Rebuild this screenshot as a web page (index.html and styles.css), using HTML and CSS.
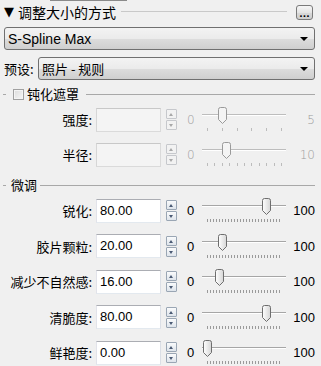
FILE: index.html
```html
<!DOCTYPE html>
<html lang="zh-CN">
<head>
<meta charset="utf-8">
<link rel="stylesheet" href="styles.css">
</head>
<body>
<div class="panel">
  <div class="topmark"></div>
  <div class="header">
    <span class="tri">▼</span>
    <span class="title">调整大小的方式</span>
    <span class="rule"></span>
    <span class="more"><span class="dots">...</span></span>
  </div>
  <div class="select wide"><span class="sel-text latin">S-Spline Max</span><span class="arrow"></span></div>
  <div class="preset">
    <span class="preset-label">预设:</span>
    <div class="select grow"><span class="sel-text">照片 - 规则</span><span class="arrow"></span></div>
  </div>

  <div class="legend">
    <span class="dash"></span>
    <span class="check"></span>
    <span class="legend-text">钝化遮罩</span>
    <span class="legend-rule"></span>
  </div>
  <div class="row disabled first">
    <span class="label">强度:</span>
    <span class="input"></span>
    <span class="spin"><span class="sbtn up"></span><span class="sbtn down"></span></span>
    <span class="minv">0</span>
    <span class="slider"><span class="track"></span><span class="ticks sparse"><i></i><i></i><i></i><i></i><i></i><i></i></span><span class="thumb" style="left:15px"><svg width="11" height="18" viewBox="0 0 11 18"><path d="M1.5 2.5 Q1.5 0.5 3.5 0.5 H7.5 Q9.5 0.5 9.5 2.5 V12.5 L5.5 16.5 L1.5 12.5 Z" fill="#f4f4f4" stroke="#9a9a9a"/></svg></span></span>
    <span class="maxv">5</span>
  </div>
  <div class="row disabled">
    <span class="label">半径:</span>
    <span class="input"></span>
    <span class="spin"><span class="sbtn up"></span><span class="sbtn down"></span></span>
    <span class="minv">0</span>
    <span class="slider"><span class="track"></span><span class="ticks sparse"><i></i><i></i><i></i><i></i><i></i><i></i><i></i><i></i><i></i><i></i><i></i></span><span class="thumb" style="left:19px"><svg width="11" height="18" viewBox="0 0 11 18"><path d="M1.5 2.5 Q1.5 0.5 3.5 0.5 H7.5 Q9.5 0.5 9.5 2.5 V12.5 L5.5 16.5 L1.5 12.5 Z" fill="#f4f4f4" stroke="#9a9a9a"/></svg></span></span>
    <span class="maxv">10</span>
  </div>

  <div class="legend second">
    <span class="dash"></span>
    <span class="legend-text">微调</span>
    <span class="legend-rule"></span>
  </div>
  <div class="row fine">
    <span class="label">锐化:</span>
    <span class="input">80.00</span>
    <span class="spin"><span class="sbtn up"></span><span class="sbtn down"></span></span>
    <span class="minv">0</span>
    <span class="slider"><span class="track"></span><span class="ticks dense"></span><span class="thumb" style="left:59px"><svg width="11" height="18" viewBox="0 0 11 18"><defs><linearGradient id="g1" x1="0" y1="0" x2="1" y2="0"><stop offset="0" stop-color="#ffffff"/><stop offset="1" stop-color="#d6d6d6"/></linearGradient></defs><path d="M1.5 2.5 Q1.5 0.5 3.5 0.5 H7.5 Q9.5 0.5 9.5 2.5 V12.5 L5.5 16.5 L1.5 12.5 Z" fill="url(#g1)" stroke="#6e6e6e"/></svg></span></span>
    <span class="maxv">100</span>
  </div>
  <div class="row fine">
    <span class="label">胶片颗粒:</span>
    <span class="input">20.00</span>
    <span class="spin"><span class="sbtn up"></span><span class="sbtn down"></span></span>
    <span class="minv">0</span>
    <span class="slider"><span class="track"></span><span class="ticks dense"></span><span class="thumb" style="left:15px"><svg width="11" height="18" viewBox="0 0 11 18"><path d="M1.5 2.5 Q1.5 0.5 3.5 0.5 H7.5 Q9.5 0.5 9.5 2.5 V12.5 L5.5 16.5 L1.5 12.5 Z" fill="url(#g1)" stroke="#6e6e6e"/></svg></span></span>
    <span class="maxv">100</span>
  </div>
  <div class="row fine">
    <span class="label">减少不自然感:</span>
    <span class="input">16.00</span>
    <span class="spin"><span class="sbtn up"></span><span class="sbtn down"></span></span>
    <span class="minv">0</span>
    <span class="slider"><span class="track"></span><span class="ticks dense"></span><span class="thumb" style="left:12px"><svg width="11" height="18" viewBox="0 0 11 18"><path d="M1.5 2.5 Q1.5 0.5 3.5 0.5 H7.5 Q9.5 0.5 9.5 2.5 V12.5 L5.5 16.5 L1.5 12.5 Z" fill="url(#g1)" stroke="#6e6e6e"/></svg></span></span>
    <span class="maxv">100</span>
  </div>
  <div class="row fine">
    <span class="label">清脆度:</span>
    <span class="input">80.00</span>
    <span class="spin"><span class="sbtn up"></span><span class="sbtn down"></span></span>
    <span class="minv">0</span>
    <span class="slider"><span class="track"></span><span class="ticks dense"></span><span class="thumb" style="left:59px"><svg width="11" height="18" viewBox="0 0 11 18"><path d="M1.5 2.5 Q1.5 0.5 3.5 0.5 H7.5 Q9.5 0.5 9.5 2.5 V12.5 L5.5 16.5 L1.5 12.5 Z" fill="url(#g1)" stroke="#6e6e6e"/></svg></span></span>
    <span class="maxv">100</span>
  </div>
  <div class="row fine">
    <span class="label">鲜艳度:</span>
    <span class="input">0.00</span>
    <span class="spin"><span class="sbtn up"></span><span class="sbtn down"></span></span>
    <span class="minv">0</span>
    <span class="slider"><span class="track"></span><span class="ticks dense"></span><span class="thumb" style="left:0px"><svg width="11" height="18" viewBox="0 0 11 18"><path d="M1.5 2.5 Q1.5 0.5 3.5 0.5 H7.5 Q9.5 0.5 9.5 2.5 V12.5 L5.5 16.5 L1.5 12.5 Z" fill="url(#g1)" stroke="#6e6e6e"/></svg></span></span>
    <span class="maxv">100</span>
  </div>
</div>
</body>
</html>
```

FILE: styles.css
```css
* { box-sizing: border-box; }
html, body { margin: 0; padding: 0; }
body {
  background: #f0f0f0;
  font-family: "Liberation Sans", "Noto Sans CJK SC", sans-serif;
  font-size: 13px;
  color: #000;
  width: 321px;
  height: 366px;
  overflow: hidden;
}
.panel { width: 321px; display: flex; flex-direction: column; }

.topmark {
  height: 1px;
  width: 77px;
  margin-left: 50px;
  background: #8a8a8a;
}

.header {
  height: 21px;
  display: flex;
  align-items: center;
  padding-left: 4px;
}
.tri { font-size: 13px; width: 11px; line-height: 12px; font-family: "DejaVu Sans", sans-serif; }
.title {
  margin-left: 3px;
  font-family: "Noto Sans CJK SC", sans-serif;
  font-size: 14px;
  line-height: 16px;
}
.rule { flex: 1; height: 1px; background: #c9c9c9; margin: 0 9px 0 5px; }
.more {
  width: 17px; height: 15px;
  border: 1px solid #7a7a7a;
  border-radius: 3px;
  background: linear-gradient(#f6f6f6, #e4e4e4 50%, #d8d8d8 51%, #cfcfcf);
  display: flex;
  align-items: flex-end;
  justify-content: center;
  padding-bottom: 2px;
  margin-right: 8px;
  margin-top: 1px;
}
.dots { font-size: 9px; line-height: 5px; letter-spacing: 0; font-family: "DejaVu Sans", sans-serif; font-weight: bold; }

.select {
  height: 23px;
  border: 1px solid #707070;
  border-radius: 3px;
  background: linear-gradient(#f3f3f3, #ebebeb 50%, #dddddd 51%, #cfcfcf);
  display: flex;
  align-items: center;
  padding-left: 3px;
  padding-right: 6px;
}
.select.wide { margin: 5px 6px 0 4px; }
.sel-text { flex: 1; font-family: "Noto Sans CJK SC", sans-serif; font-size: 13px; line-height: 16px; }
.sel-text.latin { font-family: "Liberation Sans", sans-serif; font-size: 14px; }
.arrow {
  width: 0; height: 0;
  border-left: 4px solid transparent;
  border-right: 4px solid transparent;
  border-top: 4px solid #000;
}
.preset { display: flex; align-items: center; margin: 7px 6px 0 4px; }
.preset-label { font-family: "Noto Sans CJK SC", sans-serif; font-size: 13px; width: 34px; }
.select.grow { flex: 1; }

.legend { display: flex; align-items: center; height: 12px; margin-top: 8px; }
.legend.second { margin-top: 7px; }
.dash { width: 3px; height: 1px; background: #a8a8a8; margin-left: 3px; }
.check {
  width: 11px; height: 11px;
  margin-left: 7px;
  border: 1px solid #a0a0a0;
  background: linear-gradient(135deg, #dcdcdc, #f6f6f6);
  box-shadow: inset 0 0 0 1px #f4f4f4;
}
.legend-text { margin-left: 3px; font-family: "Noto Sans CJK SC", sans-serif; font-size: 13px; line-height: 14px; }
.legend.second .legend-text { margin-left: 5px; }
.legend-rule { flex: 1; height: 1px; background: #a8a8a8; margin-left: 7px; margin-right: 6px; }
.legend.second .legend-rule { margin-left: 3px; }

.row { height: 35px; display: flex; align-items: center; }
.row.first { margin-top: 2px; }
.row.fine { height: 35.5px; }
.row.fine:first-of-type { margin-top: 0; }
.legend.second + .row { margin-top: 2px; }
.label {
  width: 92px;
  text-align: right;
  font-family: "Noto Sans CJK SC", sans-serif;
  font-size: 13px;
  white-space: nowrap;
}
.input {
  width: 65px; height: 24px;
  margin-left: 4px;
  background: #fff;
  border: 1px solid #abadb3;
  border-color: #abadb3 #dbdfe6 #e3e9ef #e2e3ea;
  font-size: 13px;
  line-height: 22px;
  padding-left: 3px;
}
.disabled .input { background: #f4f4f4; border-color: #c8c8c8 #dadada #dadada #d6d6d6; }
.spin { margin-left: 5px; width: 11px; height: 21px; display: flex; flex-direction: column; justify-content: space-between; }
.sbtn {
  height: 10px;
  border: 1px solid #9aa6b4;
  border-radius: 1px;
  background: linear-gradient(#fafbfc, #dee4eb);
  position: relative;
}
.sbtn::after {
  content: "";
  position: absolute;
  left: 2px; top: 3px;
  border-left: 2.5px solid transparent;
  border-right: 2.5px solid transparent;
}
.sbtn.up::after { border-bottom: 3px solid #4a5a74; }
.sbtn.down::after { border-top: 3px solid #4a5a74; }
.disabled .sbtn { border-color: #c6c8cc; background: #f2f2f2; }
.disabled .sbtn.up::after { border-bottom-color: #a8a8a8; }
.disabled .sbtn.down::after { border-top-color: #a8a8a8; }

.minv { margin-left: 10px; width: 8px; font-size: 13px; }
.maxv { flex: 1; text-align: right; padding-right: 6px; font-size: 13px; }
.disabled .minv, .disabled .maxv { color: #9c9c9c; font-family: "DejaVu Sans", sans-serif; font-size: 12px; font-weight: 300; }

.slider { position: relative; width: 84px; height: 35px; margin-left: 7px; }
.track {
  position: absolute; left: 0; right: 0; top: 12px;
  height: 2px;
  border-top: 1px solid #a6a6a6;
  border-bottom: 1px solid #ffffff;
}
.disabled .track { border-top-color: #bdbdbd; }
.thumb { position: absolute; top: 5px; width: 11px; height: 18px; }
.thumb svg { display: block; }
.ticks { position: absolute; top: 26px; height: 3px; left: 5px; width: 75px; }
.ticks.sparse { display: flex; justify-content: space-between; }
.ticks.sparse i { display: block; width: 1px; height: 3px; background: #bcbcbc; }
.ticks.dense {
  background: repeating-linear-gradient(90deg, #9a9a9a 0, #9a9a9a 1px, transparent 1px, transparent 3px);
}
```
